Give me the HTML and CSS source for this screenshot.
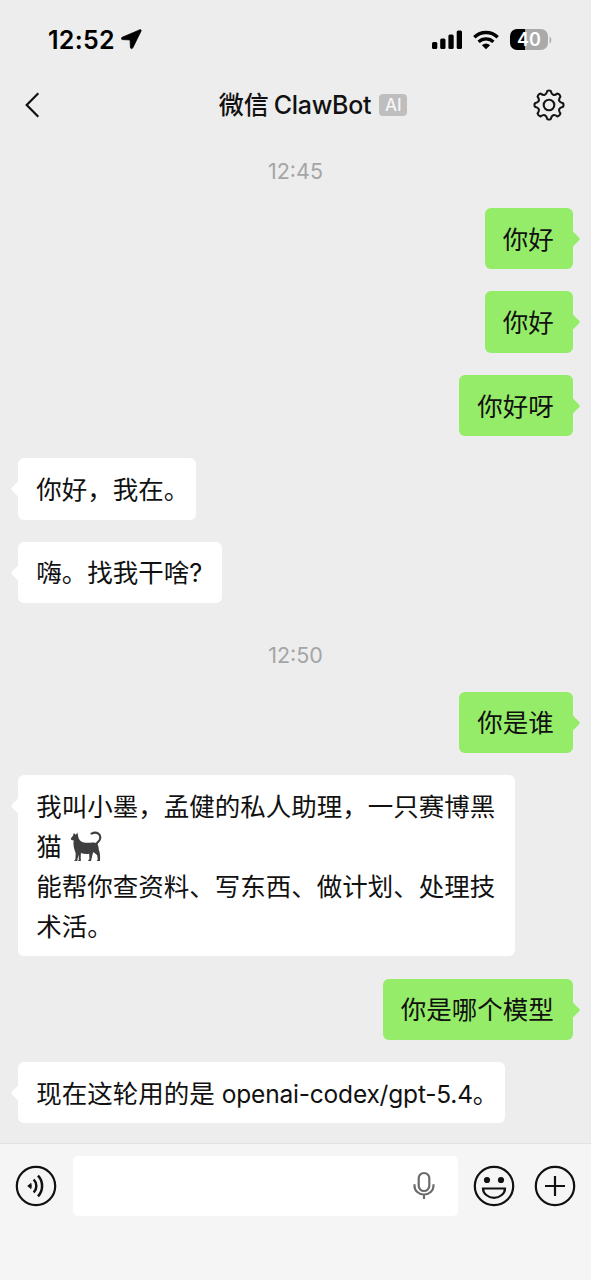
FILE: index.html
```html
<!DOCTYPE html>
<html lang="zh-CN">
<head>
<meta charset="utf-8">
<title>微信 ClawBot</title>
<link rel="stylesheet" href="styles.css">
</head>
<body>
<div class="screen">
  <div class="status">
    <div class="status-left">
      <span class="clock">12:52</span>
      <svg class="loc" width="21" height="21" viewBox="0 0 21 21"><path d="M19 .7 1.200 8.300c-1.300.6-1 2.200.4 2.300l7.500.3.3 7.400c.1 1.500 1.800 1.800 2.400.5L20.100 1.900c.3-.8-.3-1.500-1.100-1.200z" stroke="#000" stroke-width=".8"/></svg>
    </div>
    <div class="status-right">
      <svg width="31" height="20" viewBox="0 0 31 20"><rect x="0" y="12" width="5.300" height="7" rx="1.500"/><rect x="8.200" y="8.500" width="5.300" height="10.500" rx="1.500"/><rect x="16.400" y="4.500" width="5.300" height="14.500" rx="1.500"/><rect x="24.700" y="0.500" width="5.300" height="18.500" rx="1.500"/></svg>
      <svg class="wifi" width="26" height="20" viewBox="0 0 26 20"><g fill="none" stroke="#000" stroke-width="3.300"><path d="M1.300 7.300a16.700 16.700 0 0 1 23.400 0"/><path d="M5.600 11.900a10.600 10.600 0 0 1 14.800 0"/></g><path d="M13 19.300 8.900 15.200a6 6 0 0 1 8.200 0z"/></svg>
      <span class="battery">40</span><svg width="3" height="8" viewBox="0 0 3 8"><path d="M.6.5c2.300 1 2.300 6 0 7z" fill="#aaa"/></svg>
    </div>
  </div>
  <header class="nav">
    <svg width="15" height="26" viewBox="0 0 15 26" fill="none" stroke="#111" stroke-width="2.200"><path d="M13.300 1.200 1.700 13l11.600 11.800"/></svg>
    <div class="title"><span class="title-cn">微信</span><span class="title-en">ClawBot</span><span class="tag">AI</span></div>
    <svg class="gear" width="32" height="32" viewBox="-16 -16 32 32" fill="none" stroke="#151515" stroke-width="2.100" stroke-linejoin="round"><circle r="5.300"/><path d="M-1.700-14.100Q0-14.900 1.700-14.100C2.800-9.800 5-9 8.400-11.400Q10.800-10.800 11.400-8.400C9-5 9.800-2.800 14.100-1.700Q14.900 0 14.100 1.700C9.800 2.800 9 5 11.400 8.400Q10.800 10.800 8.400 11.400C5 9 2.800 9.800 1.700 14.100Q0 14.900-1.700 14.100C-2.800 9.800-5 9-8.400 11.400Q-10.800 10.800-11.400 8.400C-9 5-9.800 2.800-14.100 1.700Q-14.900 0-14.100-1.700C-9.800-2.800-9-5-11.400-8.400Q-10.800-10.800-8.400-11.400C-5-9-2.800-9.800-1.700-14.100Z"/></svg>
  </header>
  <main class="chat">
    <div class="time">12:45</div>
    <div class="bubble me">你好</div>
    <div class="bubble me">你好</div>
    <div class="bubble me">你好呀</div>
    <div class="bubble bot">你好，我在<span class="stop">。</span></div>
    <div class="bubble bot">嗨。找我干啥?</div>
    <div class="time second">12:50</div>
    <div class="bubble me">你是谁</div>
    <div class="bubble bot">我叫小墨，孟健的私人助理，一只赛博黑<br>猫<svg class="cat" width="32" height="32" viewBox="0 0 32 32" role="img" aria-label="黑猫"><path d="M21.500 2.600C27-.2 31.500 3.500 29.900 8.300c-.9 2.500-3.300 3.500-4.100 5.700" fill="none" stroke="#3e3e40" stroke-width="2.100" stroke-linecap="round"/><path fill="#3e3e40" d="M.8 7.600 3 4.700 3.800 2l2 1.700L7.400 1.500l.9 4.600c.8 3.600 3.400 5.800 8 5.600 5 0 8.500-1 10.900 1 1.700 1.700 1.100 5 2.200 7.800.7 2.200.8 5.600.6 9.500h-3.200l1-1.700-.6-4-3.800-3.300-.9 2.600-1.500 6.400h-3.100l1.500-1.900-.2-5.400c-2.800.5-5.800.2-8.300-.8l-.2 4.600.2 3.500H7.900l1-1.500-.5-5-.5 3-.7 3.500H4.100l1.300-1.700.3-6c-1.800-4.600-2.800-9-2-12.700C2 9.500.8 9 .8 7.600z"/></svg><br>能帮你查资料、写东西、做计划、处理技<br>术活。</div>
    <div class="bubble me">你是哪个模型</div>
    <div class="bubble bot">现在这轮用的是<span class="latin">openai-codex/gpt-5.4</span><span class="stop">。</span></div>
  </main>
  <footer class="bar">
    <svg width="42" height="42" viewBox="-21 -21 42 42" fill="none" stroke="#111" stroke-width="2.200"><circle r="19.200"/><path d="M-8.800 0-4.800-3.300Q-3.600 0-4.800 3.300Z" fill="#111" stroke="none"/><path d="M-2.300-6.500a9.300 9.300 0 0 1 0 13M2-10.300a15 15 0 0 1 0 20.600" stroke-width="2.500"/></svg>
    <div class="field">
      <svg width="24" height="30" viewBox="0 0 24 30" fill="none" stroke="#6b6b6b" stroke-width="2.200"><rect x="6.700" y="2" width="10.600" height="18" rx="5.300"/><path d="M2.500 13.200v1.700a9.500 8.600 0 0 0 19 0v-1.700M12 23.500v4.600"/></svg>
    </div>
    <svg width="42" height="42" viewBox="-21 -21 42 42" fill="none" stroke="#111" stroke-width="2.200"><circle r="19.200"/><circle cx="-7" cy="-6" r="3.100" fill="#111" stroke="none"/><circle cx="7" cy="-6" r="3.100" fill="#111" stroke="none"/><path d="M-11 2.500H11C11 7.500 6 11.800 0 11.800S-11 7.500-11 2.500Z"/></svg>
    <svg class="plus" width="42" height="42" viewBox="-21 -21 42 42" fill="none" stroke="#111" stroke-width="2.200"><circle r="19.200"/><path d="M-10 0H10M0-10V10"/></svg>
  </footer>
</div>
</body>
</html>
```
FILE: styles.css
```css
* { box-sizing: border-box; }
body { margin: 0; background: #ededed; }
svg { display: block; flex: none; }
.screen {
  width: 591px;
  height: 1280px;
  display: flex;
  flex-direction: column;
  background: #ededed;
  color: #111;
  font-family: "Inter", "Noto Sans CJK SC", sans-serif;
  overflow: hidden;
}
.status {
  height: 78px;
  padding: 1px 39px 0 48px;
  display: flex;
  justify-content: space-between;
  align-items: center;
}
.status-left, .status-right { display: flex; align-items: center; }
.clock { font-size: 25px; font-weight: 600; line-height: 30px; letter-spacing: 0.3px; color: #000; }
.loc { margin-left: 6px; }
.wifi { margin: 0 11px 0 10px; }
.battery {
  width: 38px;
  height: 21px;
  margin-right: 1px;
  border-radius: 7px;
  background: linear-gradient(90deg, #000 40%, #aaa 40%);
  color: #fff;
  font-size: 18px;
  font-weight: 600;
  line-height: 21px;
  text-align: center;
}
.nav {
  height: 54px;
  padding: 0 27px 0 25px;
  display: flex;
  align-items: center;
  justify-content: space-between;
}
.title { display: flex; align-items: center; margin-left: 53px; line-height: 36px; font-weight: 500; }
.title-cn { font-size: 25px; }
.title-en { font-size: 25px; margin-left: 5px; letter-spacing: -0.3px; }
.tag {
  width: 28px;
  height: 22px;
  margin-left: 8px;
  border-radius: 4px;
  background: #bebebe;
  color: #f5f5f5;
  font-size: 17px;
  line-height: 22px;
  text-align: center;
}
.gear { margin-right: -1px; }
.chat {
  flex: 1;
  display: flex;
  flex-direction: column;
  gap: 22.150px;
  padding: 24.900px 18px 0;
}
.time { height: 29px; line-height: 29px; text-align: center; font-size: 21.500px; color: #a5a5a5; }
.second { margin: 15.400px 0 0; }
.bubble {
  position: relative;
  padding: 11.700px 19.200px 9.600px 18.300px;
  border-radius: 6px;
  font-size: 25.500px;
  line-height: 40px;
  white-space: nowrap;
}
.bubble::after {
  content: "";
  position: absolute;
  top: 24px;
  width: 14px;
  height: 14px;
  border-radius: 2px;
  transform: rotate(45deg) scale(0.850);
}
.me { align-self: flex-end; background: #95ec69; }
.me::after { right: -6px; background: #95ec69; }
.bot { align-self: flex-start; background: #fff; }
.bot::after { left: -6px; background: #fff; }
.stop { margin-right: -13px; }
.cat { display: inline-block; vertical-align: -7px; margin-left: 8px; }
.latin { font-size: 24.500px; letter-spacing: -0.200px; margin-left: 7px; }
.bar {
  height: 137px;
  padding: 12px 15px 0;
  display: flex;
  align-items: flex-start;
  background: #f5f5f5;
  border-top: 1px solid #e2e2e2;
}
.bar > svg { margin-top: 9px; }
.field {
  width: 385px;
  height: 60px;
  margin: 0 15px 0 16px;
  padding-right: 22px;
  border-radius: 5px;
  background: #fff;
  display: flex;
  align-items: center;
  justify-content: flex-end;
}
.plus { margin-left: 18.500px; }
```
